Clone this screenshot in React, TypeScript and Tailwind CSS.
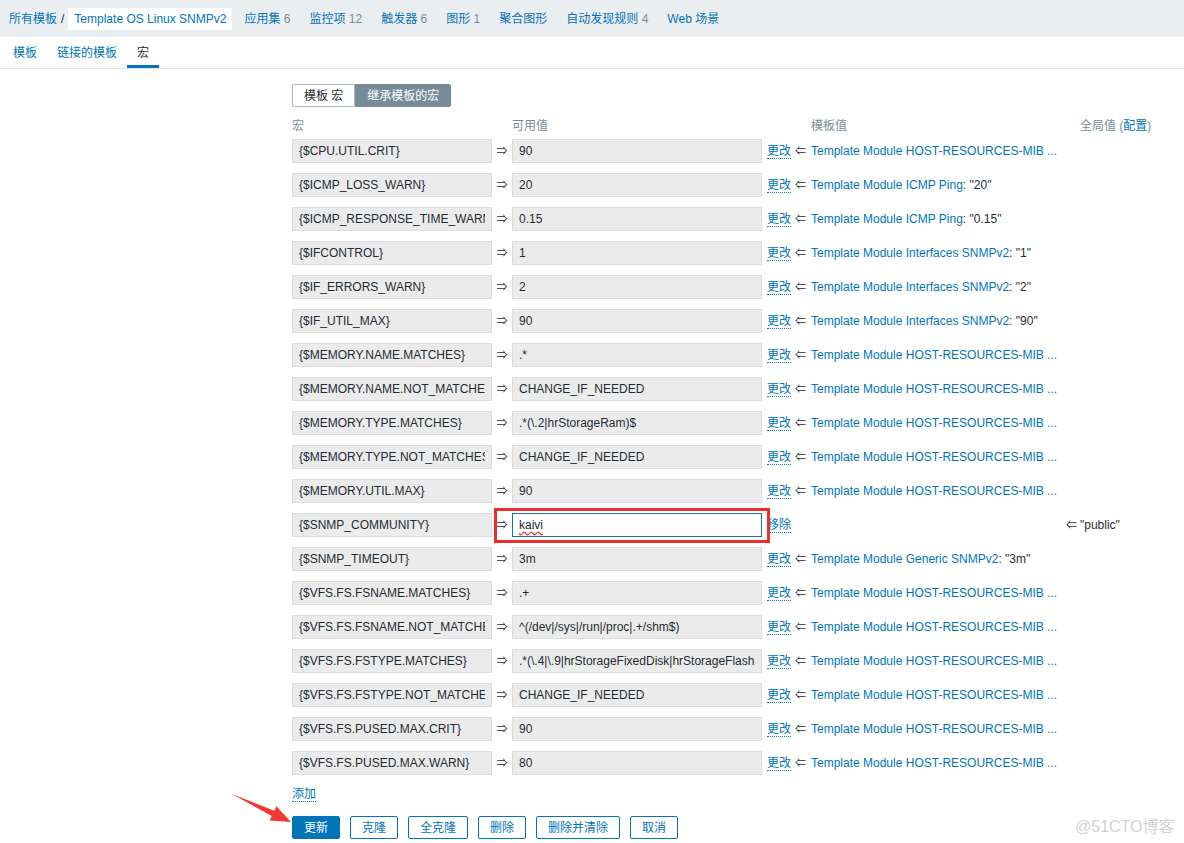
import React from "react";

type MacroRow = {
  macro: string;
  value: string;
  tpl?: string;
  tplValue?: string;
  edited?: boolean;
  global?: string;
};

const HOST_MIB = "Template Module HOST-RESOURCES-MIB ...";

const rows: MacroRow[] = [
  { macro: "{$CPU.UTIL.CRIT}", value: "90", tpl: HOST_MIB },
  { macro: "{$ICMP_LOSS_WARN}", value: "20", tpl: "Template Module ICMP Ping", tplValue: "20" },
  { macro: "{$ICMP_RESPONSE_TIME_WARN}", value: "0.15", tpl: "Template Module ICMP Ping", tplValue: "0.15" },
  { macro: "{$IFCONTROL}", value: "1", tpl: "Template Module Interfaces SNMPv2", tplValue: "1" },
  { macro: "{$IF_ERRORS_WARN}", value: "2", tpl: "Template Module Interfaces SNMPv2", tplValue: "2" },
  { macro: "{$IF_UTIL_MAX}", value: "90", tpl: "Template Module Interfaces SNMPv2", tplValue: "90" },
  { macro: "{$MEMORY.NAME.MATCHES}", value: ".*", tpl: HOST_MIB },
  { macro: "{$MEMORY.NAME.NOT_MATCHES}", value: "CHANGE_IF_NEEDED", tpl: HOST_MIB },
  { macro: "{$MEMORY.TYPE.MATCHES}", value: ".*(\\.2|hrStorageRam)$", tpl: HOST_MIB },
  { macro: "{$MEMORY.TYPE.NOT_MATCHES}", value: "CHANGE_IF_NEEDED", tpl: HOST_MIB },
  { macro: "{$MEMORY.UTIL.MAX}", value: "90", tpl: HOST_MIB },
  { macro: "{$SNMP_COMMUNITY}", value: "kaivi", edited: true, global: '"public"' },
  { macro: "{$SNMP_TIMEOUT}", value: "3m", tpl: "Template Module Generic SNMPv2", tplValue: "3m" },
  { macro: "{$VFS.FS.FSNAME.MATCHES}", value: ".+", tpl: HOST_MIB },
  { macro: "{$VFS.FS.FSNAME.NOT_MATCHES}", value: "^(/dev|/sys|/run|/proc|.+/shm$)", tpl: HOST_MIB },
  { macro: "{$VFS.FS.FSTYPE.MATCHES}", value: ".*(\\.4|\\.9|hrStorageFixedDisk|hrStorageFlashMemory)$", tpl: HOST_MIB },
  { macro: "{$VFS.FS.FSTYPE.NOT_MATCHES}", value: "CHANGE_IF_NEEDED", tpl: HOST_MIB },
  { macro: "{$VFS.FS.PUSED.MAX.CRIT}", value: "90", tpl: HOST_MIB },
  { macro: "{$VFS.FS.PUSED.MAX.WARN}", value: "80", tpl: HOST_MIB },
];

const navItems: [string, string?][] = [
  ["应用集", "6"],
  ["监控项", "12"],
  ["触发器", "6"],
  ["图形", "1"],
  ["聚合图形"],
  ["自动发现规则", "4"],
  ["Web 场景"],
];

const buttons = ["克隆", "全克隆", "删除", "删除并清除", "取消"];

function ReadonlyBox({ text, width }: { text: string; width: string }) {
  return (
    <input
      readOnly
      value={text}
      className={`${width} h-[24px] bg-[#ebebeb] border border-[#dcdcdc] px-[6px] text-[12px] text-[#1f2c33] outline-none`}
    />
  );
}

function MacroLine({ row }: { row: MacroRow }) {
  return (
    <div className="flex items-center h-[34px] whitespace-nowrap">
      <ReadonlyBox text={row.macro} width="w-[200px]" />
      {row.edited ? (
        <div className="relative flex items-center">
          <span className="w-[20px] text-center text-[11px] text-[#1f2c33]">⇒</span>
          <div className="w-[250px] h-[24px] bg-white border border-[#1b6fa8] px-[6px] flex items-center text-[#1f2c33]">
            <span className="underline decoration-wavy decoration-[#e8262b] underline-offset-2">
              {row.value}
            </span>
          </div>
          <div className="absolute left-[2px] top-[-5px] w-[276px] h-[35px] border-[3px] border-[#ea2f2f]" />
        </div>
      ) : (
        <>
          <span className="w-[20px] text-center text-[11px] text-[#1f2c33]">⇒</span>
          <ReadonlyBox text={row.value} width="w-[250px]" />
        </>
      )}
      <div className="w-[33px] pl-[5px]">
        <a className="text-[#0275b8] border-b border-dotted border-[#0275b8] leading-[14px]">
          {row.edited ? "移除" : "更改"}
        </a>
      </div>
      {row.tpl ? (
        <>
          <span className="w-[16px] text-[11px] text-[#1f2c33]">⇐</span>
          <span className="w-[251px] overflow-hidden">
            <span className="text-[#0275b8]">{row.tpl}</span>
            {row.tplValue && <span className="text-[#1f2c33]">: "{row.tplValue}"</span>}
          </span>
        </>
      ) : (
        <span className="w-[267px]" />
      )}
      {row.global && (
        <>
          <span className="w-[18px] pl-[4px] text-[11px] text-[#1f2c33]">⇐</span>
          <span className="text-[#1f2c33]">{row.global}</span>
        </>
      )}
    </div>
  );
}

export default function App() {
  return (
    <div
      className="relative w-[1184px] min-h-[843px] bg-white text-[12px] text-[#1f2c33] overflow-hidden"
      style={{ fontFamily: '"Liberation Sans", Arial, "Noto Sans CJK SC", sans-serif' }}
    >
      <div className="h-[37px] bg-[#ebeef1] flex items-center pl-[9px] whitespace-nowrap">
        <a className="text-[#0275b8]">所有模板</a>
        <span className="mx-[4px] text-[#1f2c33]">/</span>
        <span className="bg-white px-[6px] h-[22px] flex items-center text-[#0275b8] rounded-[2px]">
          Template OS Linux SNMPv2
        </span>
        <div className="flex items-center ml-[12px] gap-[19px]">
          {navItems.map(([label, count]) => (
            <span key={label} className="text-[#0275b8]">
              {label}
              {count && <span className="text-[#768d99]"> {count}</span>}
            </span>
          ))}
        </div>
      </div>

      <div className="h-[32px] flex items-stretch pl-[3px] border-b border-[#dfe4e7]">
        <span className="px-[10px] flex items-center text-[#0275b8]">模板</span>
        <span className="px-[10px] flex items-center text-[#0275b8]">链接的模板</span>
        <span className="px-[10px] flex items-center text-[#1f2c33] border-b-[3px] border-[#0275b8] pt-[3px]">
          宏
        </span>
      </div>

      <div className="ml-[292px] pt-[15px]">
        <div className="flex h-[23px]">
          <span className="px-[11px] flex items-center bg-white border border-[#acbbc2] rounded-l-[2px] text-[#1f2c33]">
            模板 宏
          </span>
          <span className="px-[12px] flex items-center bg-[#768d99] text-white rounded-r-[2px]">
            继承模板的宏
          </span>
        </div>

        <div className="flex h-[27px] pt-[12px] leading-[14px] text-[#768d99] whitespace-nowrap">
          <span className="w-[220px]">宏</span>
          <span className="w-[299px]">可用值</span>
          <span className="w-[269px]">模板值</span>
          <span>
            全局值 (<a className="text-[#0275b8]">配置</a>)
          </span>
        </div>

        <div className="flex flex-col">
          {rows.map((r) => (
            <MacroLine key={r.macro} row={r} />
          ))}
        </div>

        <div className="mt-[7px] leading-[14px]">
          <a className="text-[#0275b8] border-b border-dotted border-[#0275b8]">添加</a>
        </div>

        <div className="flex gap-[10px] mt-[15px]">
          <button className="h-[23px] px-[11px] bg-[#0275b8] border border-[#0275b8] text-white rounded-[2px]">
            更新
          </button>
          {buttons.map((b) => (
            <button
              key={b}
              className="h-[23px] px-[11px] bg-white border border-[#0275b8] text-[#0275b8] rounded-[2px]"
            >
              {b}
            </button>
          ))}
        </div>
      </div>

      <svg className="absolute left-0 top-0 pointer-events-none" width="1184" height="843">
        <polygon
          points="232,794 274.3,810.7 276.4,806.2 291,822 269.6,820.6 271.7,816.1"
          fill="#ee3a33"
        />
      </svg>

      <span className="absolute left-[1075px] top-[815px] text-[16px] text-[#d2d2d2] whitespace-nowrap">
        @51CTO博客
      </span>
    </div>
  );
}
